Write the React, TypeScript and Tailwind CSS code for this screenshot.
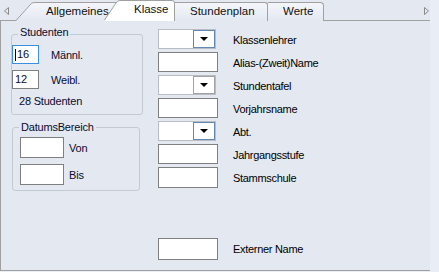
const Box = ({ w, h, blue, children }: { w: string; h: string; blue?: boolean; children?: React.ReactNode }) => (
  <div
    className={`${w} ${h} bg-white border flex items-center pl-[2px] text-[11px] text-[#0b0b30] ${
      blue ? "border-[#3c8fe0]" : "border-[#7f7f7f]"
    }`}
  >
    {children}
  </div>
);

const Combo = ({ active }: { active?: boolean }) => (
  <div className="w-[58px] h-[20px] bg-white border border-[#b9bcc2] flex">
    <div className="flex-1" />
    <div
      className={`w-[22px] h-full border flex items-center justify-center ${
        active ? "border-[#6688b5]" : "border-[#a3a3a3]"
      }`}
    >
      <svg width="8" height="4" viewBox="0 0 8 4">
        <path d="M0 0 L8 0 L4 4 Z" fill="#000" />
      </svg>
    </div>
  </div>
);

const Row = ({ label, children }: { label: string; children: React.ReactNode }) => (
  <div className="flex items-center h-[20px]">
    <div className="w-[75px]">{children}</div>
    <span className="pt-[3px] text-[11px] tracking-[-0.3px] text-black">{label}</span>
  </div>
);

export default function App() {
  return (
    <div className="w-[439px] h-[272px] bg-[#e9edf5] font-['Liberation_Sans',Arial,sans-serif] overflow-hidden">
      <div className="w-[430px] h-[271px] flex flex-col bg-[#e3e8f1]">
        {/* tab strip */}
        <div className="h-[21px] flex items-end shrink-0">
          <svg className="self-start mt-[7px] ml-[4px] mr-[6px]" width="5" height="8" viewBox="0 0 5 8">
            <path d="M4.5 0.5 L4.5 7.5 L0.5 4 Z" fill="none" stroke="#8a8a8a" />
          </svg>
          <div className="relative w-[103px] h-[19px] flex items-center">
            <svg className="absolute inset-0" width="103" height="19" viewBox="0 0 103 19">
              <defs>
                <linearGradient id="tg" x1="0" y1="0" x2="0" y2="1">
                  <stop offset="0" stopColor="#f4f6fa" />
                  <stop offset="1" stopColor="#e3e8f1" />
                </linearGradient>
              </defs>
              <path d="M0.5 19 L15 3 Q16.5 0.5 19 0.5 L103 0.5 L103 19 Z" fill="url(#tg)" />
              <path d="M0.5 19 L15 3 Q16.5 0.5 19 0.5 L103 0.5" fill="none" stroke="#a0a0a0" />
            </svg>
            <span className="relative pl-[31px] text-[11.5px] text-[#111]">Allgemeines</span>
          </div>
          <div className="relative z-10 -ml-[14px] w-[71px] h-[21px] flex items-center">
            <svg className="absolute inset-0" width="71" height="21" viewBox="0 0 71 21">
              <path d="M0.5 21 L12 3 Q13.5 0.5 16 0.5 L68 0.5 Q70.5 0.5 70.5 3 L70.5 21 Z" fill="#fff" />
              <path d="M0.5 20 L12 3 Q13.5 0.5 16 0.5 L68 0.5 Q70.5 0.5 70.5 3 L70.5 21" fill="none" stroke="#a0a0a0" />
            </svg>
            <span className="relative pl-[30px] pb-[1px] text-[11.5px] text-[#111]">Klasse</span>
          </div>
          <div className="relative z-[5] w-[93px] h-[19px] bg-gradient-to-b from-[#f4f6fa] to-[#e3e8f1] border-t border-r border-[#a0a0a0] rounded-tr-[3px] flex items-center pl-[15px]">
            <span className="text-[11.5px] text-[#111]">Stundenplan</span>
          </div>
          <div className="relative w-[56px] h-[19px] bg-gradient-to-b from-[#f4f6fa] to-[#e3e8f1] border-t border-r border-[#a0a0a0] rounded-tr-[4px] flex items-center pl-[15px]">
            <span className="text-[11.5px] text-[#111]">Werte</span>
          </div>
          <svg className="self-start mt-[7px] ml-auto mr-[1px]" width="5" height="8" viewBox="0 0 5 8">
            <path d="M0.5 0.5 L0.5 7.5 L4.5 4 Z" fill="none" stroke="#8a8a8a" />
          </svg>
        </div>

        {/* panel */}
        <div className="-mt-px flex-1 border-t border-l border-b border-[#a0a0a0] flex">
          <div className="w-[157px] pl-[10px] pt-[5px] flex flex-col text-[11px] tracking-[-0.2px] text-[#0b0b30]">
            <fieldset className="w-[132px] h-[89px] border border-[#c4c9d2] rounded-[3px] flex flex-col">
              <legend className="ml-[6px] px-[2px] pb-[4px] leading-[13px]">Studenten</legend>
              <div className="mt-[2px] flex items-center">
                <Box w="w-[27px]" h="h-[19px]" blue>
                  <span className="w-px h-[12px] bg-black mr-px" />
                  16
                </Box>
                <span className="ml-[12px] pt-[1px]">Männl.</span>
              </div>
              <div className="mt-[6px] flex items-center">
                <Box w="w-[27px]" h="h-[19px]">
                  12
                </Box>
                <span className="ml-[12px] pt-[1px]">Weibl.</span>
              </div>
              <div className="mt-[6px] ml-[7px] leading-[13px]">28 Studenten</div>
            </fieldset>
            <fieldset className="ml-px mt-[6px] w-[128px] h-[70px] border border-[#c4c9d2] rounded-[3px] flex flex-col pl-[7px]">
              <legend className="ml-[-1px] px-[2px] leading-[13px]">DatumsBereich</legend>
              <div className="mt-[3px] flex items-center">
                <Box w="w-[44px]" h="h-[21px]" />
                <span className="ml-[5px] pt-[1px]">Von</span>
              </div>
              <div className="mt-[6px] flex items-center">
                <Box w="w-[44px]" h="h-[21px]" />
                <span className="ml-[5px] pt-[1px]">Bis</span>
              </div>
            </fieldset>
          </div>

          <div className="pt-[8px] flex flex-col gap-[3px]">
            <Row label="Klassenlehrer">
              <Combo active />
            </Row>
            <Row label="Alias-(Zweit)Name">
              <Box w="w-[60px]" h="h-[20px]" />
            </Row>
            <Row label="Stundentafel">
              <Combo />
            </Row>
            <Row label="Vorjahrsname">
              <Box w="w-[60px]" h="h-[20px]" />
            </Row>
            <Row label="Abt.">
              <Combo active />
            </Row>
            <Row label="Jahrgangsstufe">
              <Box w="w-[60px]" h="h-[20px]" />
            </Row>
            <Row label="Stammschule">
              <Box w="w-[60px]" h="h-[21px]" />
            </Row>
            <div className="mt-[48px] flex items-center h-[22px]">
              <div className="w-[75px]">
                <Box w="w-[60px]" h="h-[22px]" />
              </div>
              <span className="text-[11px] tracking-[-0.3px] text-black">Externer Name</span>
            </div>
          </div>
        </div>
      </div>
    </div>
  );
}
